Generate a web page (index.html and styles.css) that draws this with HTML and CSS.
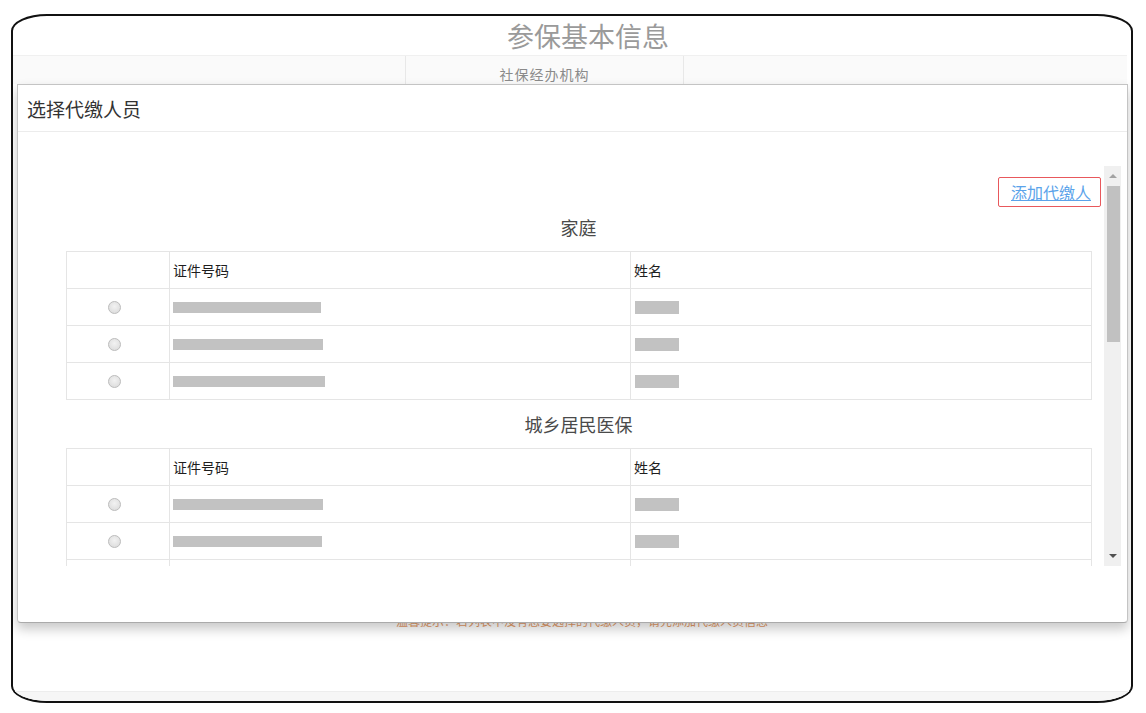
FILE: index.html
```html
<!DOCTYPE html>
<html lang="zh-CN">
<head>
<meta charset="utf-8">
<title>选择代缴人员</title>
<link rel="stylesheet" href="styles.css">
</head>
<body>
<div class="frame">
  <div class="page">
    <div class="page-title">参保基本信息</div>
    <div class="band">
      <div class="band-cell"></div>
      <div class="band-cell band-label">社保经办机构</div>
      <div class="band-cell"></div>
    </div>
    <div class="notice">温馨提示：若列表中没有您要选择的代缴人员，请先添加代缴人员信息</div>
    <div class="footer-strip"></div>
  </div>

  <div class="modal">
    <div class="modal-header">选择代缴人员</div>
    <div class="modal-body">
      <div class="scroll-box">
        <div class="scroll-content">
          <div class="link-row"><a class="add-link" href="#">添加代缴人</a></div>

          <h3 class="group-title">家庭</h3>
          <table class="grid">
            <colgroup><col class="c1"><col class="c2"><col class="c3"></colgroup>
            <thead>
              <tr><th></th><th>证件号码</th><th>姓名</th></tr>
            </thead>
            <tbody>
              <tr><td class="radio-cell"><span class="radio"></span></td><td><span class="bar" style="width:148px"></span></td><td><span class="bar name"></span></td></tr>
              <tr><td class="radio-cell"><span class="radio"></span></td><td><span class="bar" style="width:150px"></span></td><td><span class="bar name"></span></td></tr>
              <tr><td class="radio-cell"><span class="radio"></span></td><td><span class="bar" style="width:152px"></span></td><td><span class="bar name"></span></td></tr>
            </tbody>
          </table>

          <h3 class="group-title">城乡居民医保</h3>
          <table class="grid">
            <colgroup><col class="c1"><col class="c2"><col class="c3"></colgroup>
            <thead>
              <tr><th></th><th>证件号码</th><th>姓名</th></tr>
            </thead>
            <tbody>
              <tr><td class="radio-cell"><span class="radio"></span></td><td><span class="bar" style="width:150px"></span></td><td><span class="bar name"></span></td></tr>
              <tr><td class="radio-cell"><span class="radio"></span></td><td><span class="bar" style="width:149px"></span></td><td><span class="bar name"></span></td></tr>
              <tr><td class="radio-cell"><span class="radio"></span></td><td><span class="bar" style="width:151px"></span></td><td><span class="bar name"></span></td></tr>
            </tbody>
          </table>
        </div>
        <div class="scrollbar">
          <div class="sb-btn"><span class="arrow-up"></span></div>
          <div class="sb-thumb"></div>
          <div class="sb-track"></div>
          <div class="sb-btn"><span class="arrow-down"></span></div>
        </div>
      </div>
    </div>
  </div>
</div>
</body>
</html>
```

FILE: styles.css
```css
* { box-sizing: border-box; }

html, body {
  margin: 0;
  padding: 0;
  background: #ffffff;
}

body {
  width: 1146px;
  height: 713px;
  overflow: hidden;
  font-family: "Noto Sans CJK SC", "Noto Sans", "Liberation Sans", sans-serif;
  color: #333;
}

.frame {
  position: relative;
  margin: 14px 13px 0 11px;
  width: 1122px;
  height: 689px;
  border: 2px solid #111;
  border-radius: 36px / 17px;
  overflow: hidden;
  background: #fff;
}

.page {
  display: flex;
  flex-direction: column;
  height: 100%;
}

.page-title {
  height: 39px;
  line-height: 39px;
  text-align: center;
  font-size: 27px;
  color: #9a9a9a;
  padding-left: 32px;
}

.band {
  display: grid;
  grid-template-columns: 392px 278px 1fr;
  height: 29px;
  margin-right: 4px;
  background: #fafafa;
  border-top: 1px solid #f0f0f0;
}

.band-cell + .band-cell {
  border-left: 1px solid #e8e8e8;
}

.band-label {
  text-align: center;
  font-size: 14px;
  color: #8a8a8a;
  padding-top: 10px;
  line-height: 16px;
  letter-spacing: 1px;
}

.notice {
  margin-top: 529px;
  text-align: center;
  padding-left: 20px;
  font-size: 12px;
  line-height: 16px;
  color: #e39a68;
}

.footer-strip {
  margin-top: auto;
  height: 10px;
  background: #f6f6f6;
  border-top: 1px solid #ededed;
}

/* modal overlays the page */
.modal {
  position: absolute;
  left: 4px;
  top: 68px;
  width: 1111px;
  height: 539px;
  background: #fff;
  border: 1px solid #c4c4c4;
  border-bottom-color: #aaa;
  border-radius: 0 0 4px 4px;
  box-shadow: 0 6px 12px rgba(0, 0, 0, 0.22);
  display: flex;
  flex-direction: column;
}

.modal-header {
  height: 47px;
  padding: 11px 0 0 9px;
  font-size: 19px;
  line-height: 26px;
  color: #333;
  border-bottom: 1px solid #ececec;
}

.modal-body {
  padding: 34px 6px 0 34px;
}

.scroll-box {
  display: flex;
  height: 400px;
  overflow: hidden;
}

.scroll-content {
  flex: 1;
  padding: 11px 13px 0 14px;
  overflow: hidden;
}

.link-row {
  display: flex;
  justify-content: flex-end;
  margin-right: -10px;
}

.add-link {
  display: block;
  height: 30px;
  padding: 0 9px 0 12px;
  border: 1px solid #e8585c;
  border-radius: 2px;
  font-size: 16px;
  line-height: 28px;
  color: #5ba3ea;
  text-decoration: underline;
}

.group-title {
  margin: 8px 0 12px;
  text-align: center;
  font-size: 18px;
  line-height: 24px;
  font-weight: normal;
  color: #4a4a4a;
}

.grid {
  width: 1025px;
  border-collapse: collapse;
  margin-bottom: 12px;
  table-layout: fixed;
}

.grid col.c1 { width: 103px; }
.grid col.c2 { width: 461px; }
.grid col.c3 { width: 461px; }

.grid th,
.grid td {
  height: 37px;
  border: 1px solid #e5e5e5;
  padding: 0 0 0 3px;
  text-align: left;
  vertical-align: middle;
}

.grid th {
  font-size: 14px;
  font-weight: normal;
  color: #1e1e1e;
}

.grid td.radio-cell {
  padding: 0 7px 0 0;
}

.radio {
  display: block;
  margin: 0 auto;
  width: 13px;
  height: 13px;
  border-radius: 50%;
  border: 1px solid #bdbdbd;
  background: radial-gradient(circle at 50% 40%, #f2f2f2 0%, #e0e0e0 70%, #d4d4d4 100%);
}

.bar {
  display: block;
  height: 11px;
  background: #c2c2c2;
}

.bar.name {
  width: 44px;
  height: 13px;
  margin-left: 1px;
}

/* scrollbar */
.scrollbar {
  width: 17px;
  flex: 0 0 17px;
  display: flex;
  flex-direction: column;
  background: #f0f0f0;
}

.sb-btn {
  height: 20px;
  display: flex;
  align-items: center;
  justify-content: center;
}

.arrow-up {
  width: 0;
  height: 0;
  border-left: 4px solid transparent;
  border-right: 4px solid transparent;
  border-bottom: 4px solid #a3a3a3;
}

.arrow-down {
  width: 0;
  height: 0;
  border-left: 4px solid transparent;
  border-right: 4px solid transparent;
  border-top: 4px solid #505050;
}

.sb-thumb {
  height: 156px;
  margin: 0 1px 0 3px;
  background: #c1c1c1;
}

.sb-track {
  flex: 1;
}
```
